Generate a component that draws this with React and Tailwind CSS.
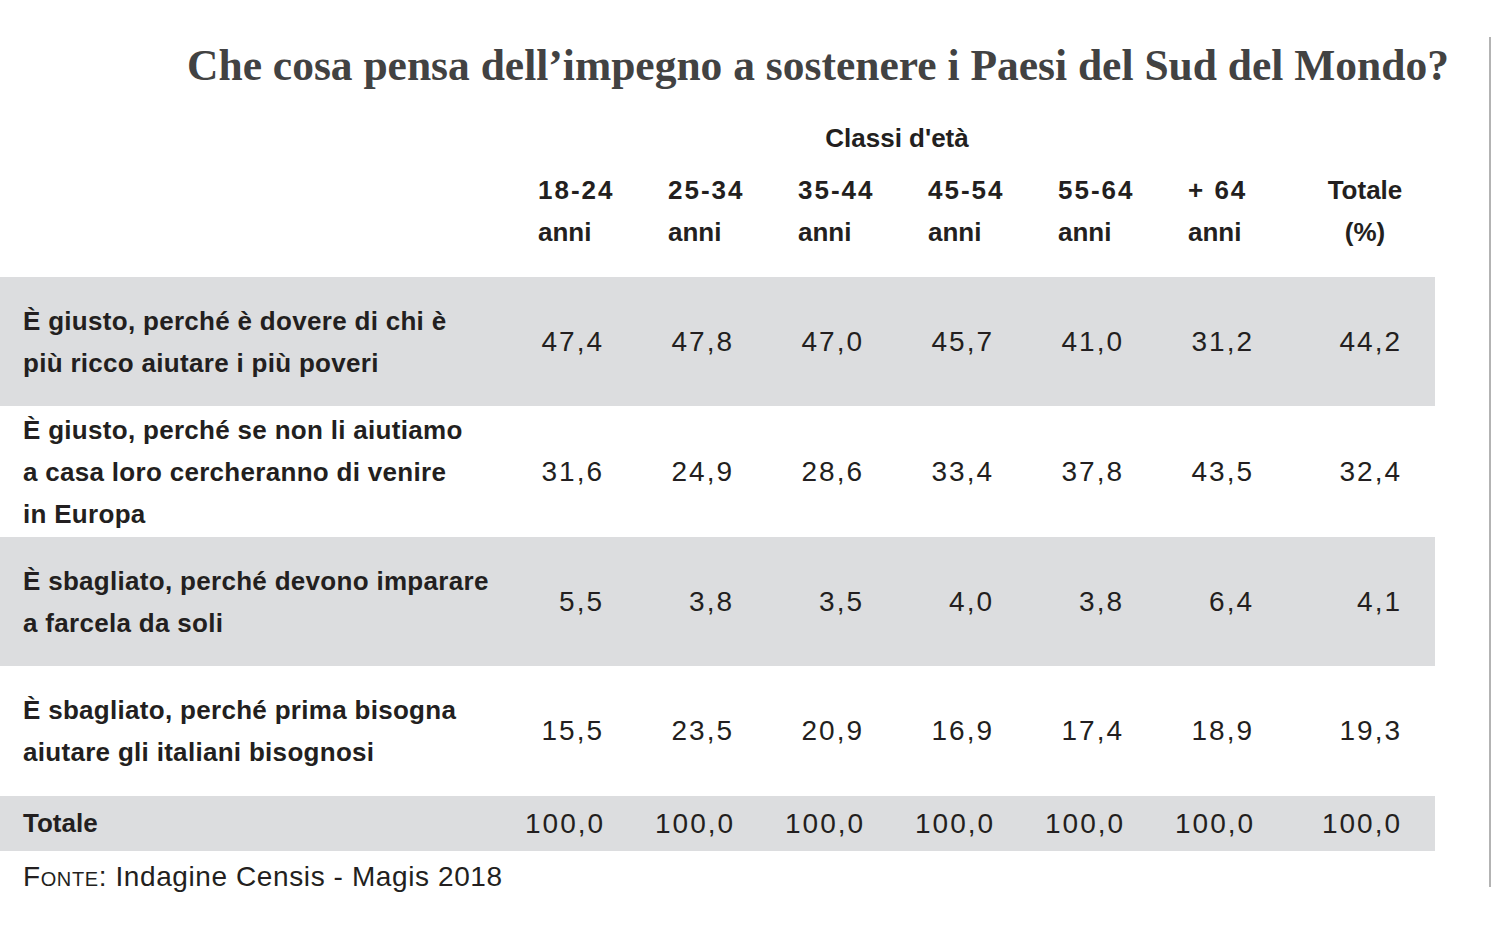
import React from 'react';

const AGES = [
  ['18-24', 'anni'],
  ['25-34', 'anni'],
  ['35-44', 'anni'],
  ['45-54', 'anni'],
  ['55-64', 'anni'],
  ['+ 64', 'anni'],
];

const ROWS = [
  { label: ['È giusto, perché è dovere di chi è', 'più ricco aiutare i più poveri'], values: ['47,4', '47,8', '47,0', '45,7', '41,0', '31,2', '44,2'], shaded: true, h: 'h-[129px]' },
  { label: ['È giusto, perché se non li aiutiamo', 'a casa loro cercheranno di venire', 'in Europa'], values: ['31,6', '24,9', '28,6', '33,4', '37,8', '43,5', '32,4'], shaded: false, h: 'h-[131px]' },
  { label: ['È sbagliato, perché devono imparare', 'a farcela da soli'], values: ['5,5', '3,8', '3,5', '4,0', '3,8', '6,4', '4,1'], shaded: true, h: 'h-[129px]' },
  { label: ['È sbagliato, perché prima bisogna', 'aiutare gli italiani bisognosi'], values: ['15,5', '23,5', '20,9', '16,9', '17,4', '18,9', '19,3'], shaded: false, h: 'h-[130px]' },
];

const grid = 'grid grid-cols-[525px_repeat(6,130px)_130px]';

function Num({ v, last }) {
  return (
    <div className={`text-right text-[28px] tracking-[2px] ${last ? 'pr-[33px]' : 'pr-[51px]'}`}>{v}</div>
  );
}

function Row({ row }) {
  return (
    <div className={`${grid} items-center ${row.h} ${row.shaded ? 'bg-[#dcdddf]' : 'bg-white'}`}>
      <div className="pl-[23px] font-bold text-[26px] leading-[42px] tracking-[0.3px]">
        {row.label.map(l => <div key={l}>{l}</div>)}
      </div>
      {row.values.map((v, i) => <Num key={i} v={v} last={i === 6} />)}
    </div>
  );
}

export default function App() {
  return (
    <div className="w-[1496px] h-[927px] bg-white text-[#231f20] flex font-['Liberation_Sans',Arial,sans-serif]">
      <div className="w-[1489px] shrink-0">
        <h1 className="pt-[38px] pr-[40px] text-right font-['Liberation_Serif',serif] font-bold text-[43.5px] leading-[54px] text-[#424242]">
          Che cosa pensa dell’impegno a sostenere i Paesi del Sud del Mondo?
        </h1>

        <div className="w-[1435px] h-[185px]">
          <div className={`${grid} pt-[25px]`}>
            <div />
            <div className="col-span-6 text-center pr-[36px] font-bold text-[26px] leading-[42px]">Classi d'età</div>
            <div />
          </div>
          <div className={`${grid} pt-[10px] font-bold text-[26px] leading-[42px]`}>
            <div />
            {AGES.map(([a, b]) => (
              <div key={a} className="pl-[13px]">
                <div className="tracking-[2px]">{a}</div>
                <div>{b}</div>
              </div>
            ))}
            <div className="text-center pr-[10px]">
              <div>Totale</div>
              <div>(%)</div>
            </div>
          </div>
        </div>

        <div className="w-[1435px]">
          {ROWS.map((r, i) => <Row key={i} row={r} />)}
          <div className={`${grid} items-center h-[55px] bg-[#dcdddf]`}>
            <div className="pl-[23px] font-bold text-[26px]">Totale</div>
            {Array.from({ length: 7 }).map((_, i) => <Num key={i} v="100,0" last={i === 6} />)}
          </div>
        </div>

        <div className="pl-[23px] pt-[8px] text-[28px] leading-[36px] tracking-[0.6px]">
          <span className="[font-variant:small-caps]">Fonte</span>: Indagine Censis - Magis 2018
        </div>
      </div>
      <div className="w-[2px] shrink-0 mt-[37px] h-[850px] bg-[#b3b3b3]" />
    </div>
  );
}
